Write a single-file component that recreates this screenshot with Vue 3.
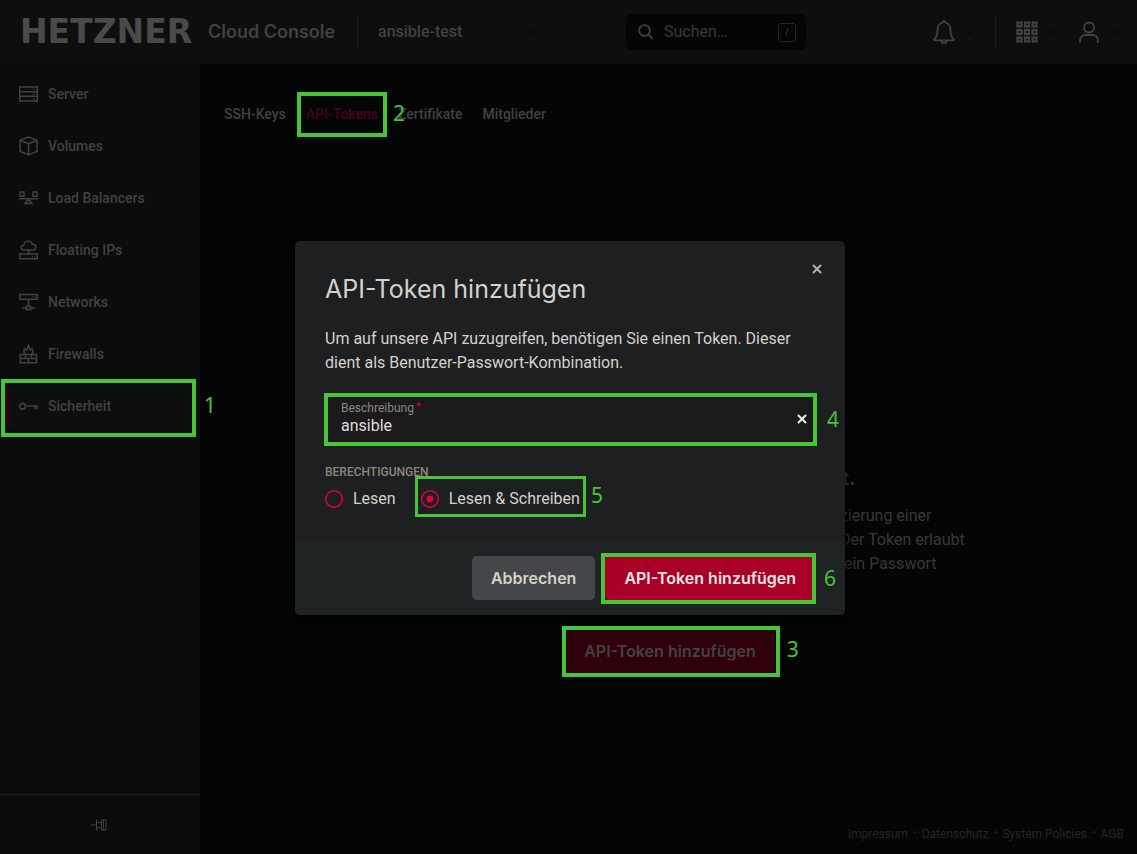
<script setup>
import { ref } from 'vue'

const project = ref('ansible-test')
const description = ref('ansible')
const permission = ref('rw')

const nav = [
  { label: 'Server', icon: 'server' },
  { label: 'Volumes', icon: 'volume' },
  { label: 'Load Balancers', icon: 'balancer' },
  { label: 'Floating IPs', icon: 'floating' },
  { label: 'Networks', icon: 'network' },
  { label: 'Firewalls', icon: 'firewall' },
  { label: 'Sicherheit', icon: 'key', step: 1 },
]

const paths = {
  server: 'M.7 3h17.6v14H.7z M.7 7.7h17.6 M.7 12.3h17.6 M14 5.3h1.500 M14 10h1.500 M14 14.7h1.500',
  volume: 'M9.500 1l8.500 3.200v11.300L9.500 19 1 15.500V4.200z M1 4.200l8.500 3.600L18 4.200 M9.500 7.800V19',
  balancer: 'M1 4h4v4.200H1z M14 4h4v4.200h-4z M0 10.800h19 M9.500 11.500l3.500 4H6z',
  floating: 'M5 10C1 10 1.200 5.200 4.700 5.300 5.500 .2 12.500 .2 13.300 4.300 18.300 4.500 17.300 10 14 10z M9.500 10v4 M.7 14h17.600v4.800H.7z M13 16.400h1 M15.500 16.400h1',
  network: 'M.7 2.500h17.600v4.800H.7z M13.500 5h1 M15.500 5h1 M9.500 7.500v7 M3 16h4 M12 16h4 M7.500 14.300h4v3.400h-4z',
  firewall: 'M1.200 10.500h16.300v8.200H1.200z M1.200 14.600h16.300 M6.500 10.500v4 M12.500 10.500v4 M9.500 14.600v4.200 M6 10C4 8 5 6 5.500 4.500L7.500 6l2-4.500L11 6l2-1.500C14.500 7 14.500 8.500 12.500 10',
  key: 'M6.500 10.300a2.900 2.900 0 1 1-5.800 0a2.900 2.900 0 1 1 5.800 0z M6.500 10h12.300 M18 10v3.500 M15.700 10v3',
}

const tabs = [
  { label: 'SSH-Keys' },
  { label: 'API-Tokens', active: true, step: 2 },
  { label: 'Zertifikate' },
  { label: 'Mitglieder' },
]

const legal = ['Impressum', 'Datenschutz', 'System Policies', 'AGB']
</script>

<template>
  <div class="console">
    <header class="topbar">
      <a class="brand" href="#">
        <span class="wordmark">HETZNER</span>
        <span class="product">Cloud Console</span>
      </a>
      <div class="project">
        <select v-model="project" aria-label="Projekt">
          <option>ansible-test</option>
        </select>
        <svg class="chevron" viewBox="0 0 10 6"><path d="M1 1l4 4 4-4" /></svg>
      </div>
      <label class="search">
        <svg viewBox="0 0 16 16"><circle cx="6.500" cy="6.500" r="5.400" /><path d="M10.500 10.500l4.500 4.500" /></svg>
        <input type="search" placeholder="Suchen…" aria-label="Suchen" />
        <kbd>/</kbd>
      </label>
      <div class="tools">
        <button type="button" class="tool" aria-label="Benachrichtigungen">
          <svg class="glyph" viewBox="0 0 22 24">
            <path d="M9.500 2.500a1.500 1.500 0 0 1 3 0c3.500 1 5 4 5 7.500 0 5 1 7.500 3.300 9.500v.8H1.200v-.8C3.500 17.500 4.500 15 4.500 10c0-3.500 1.500-6.500 5-7.500z M8.500 20.800a2.500 2.300 0 0 0 5 0" />
          </svg>
          <svg class="chevron" viewBox="0 0 10 6"><path d="M1 1l4 4 4-4" /></svg>
        </button>
        <span class="rule"></span>
        <button type="button" class="tool" aria-label="Produkte">
          <svg class="glyph grid" viewBox="0 0 22 24">
            <template v-for="r in 3" :key="r">
              <rect v-for="c in 3" :key="c" :x="c * 7.500 - 6" :y="r * 7.500 - 5" width="4" height="4" />
            </template>
          </svg>
          <svg class="chevron" viewBox="0 0 10 6"><path d="M1 1l4 4 4-4" /></svg>
        </button>
        <button type="button" class="tool" aria-label="Konto">
          <svg class="glyph" viewBox="0 0 22 24">
            <circle cx="11" cy="7.500" r="5" />
            <path d="M2.200 23v-3a5 5 0 0 1 5-5h7.600a5 5 0 0 1 5 5v3" />
          </svg>
          <svg class="chevron" viewBox="0 0 10 6"><path d="M1 1l4 4 4-4" /></svg>
        </button>
      </div>
    </header>

    <div class="body">
      <aside class="sidebar">
        <nav>
          <a v-for="item in nav" :key="item.label" href="#" :class="{ active: item.step }">
            <svg viewBox="0 0 20 20"><path :d="paths[item.icon]" /></svg>
            {{ item.label }}
            <span v-if="item.step" class="mark mark-nav"><span>{{ item.step }}</span></span>
          </a>
        </nav>
        <button type="button" class="pin" aria-label="Seitenleiste anheften">
          <svg viewBox="0 0 16 12"><path d="M0 6h5 M5.500 .5v11 M5.500 3l5 1V1h4.500v10h-4.500V8l-5 1 M12.500 1v10 M10.500 4v4" /></svg>
        </button>
      </aside>

      <main>
        <nav class="tabs">
          <a v-for="tab in tabs" :key="tab.label" href="#" :class="{ current: tab.active }">
            {{ tab.label }}
            <span v-if="tab.step" class="mark mark-tab"><span>{{ tab.step }}</span></span>
          </a>
        </nav>
        <section class="empty">
          <div class="copy">
            <h2>t.</h2>
            <p>zierung einer<br />Der Token erlaubt<br />&nbsp;ein Passwort</p>
          </div>
          <button type="button" class="btn dimmed">
            API-Token hinzufügen
            <span class="mark mark-btn"><span>3</span></span>
          </button>
        </section>
        <footer class="legal">
          <template v-for="(entry, i) in legal" :key="entry">
            <span v-if="i" class="dot">·</span>
            <a href="#">{{ entry }}</a>
          </template>
        </footer>
      </main>
    </div>

    <div class="overlay">
      <form class="dialog" role="dialog" aria-labelledby="dialog-title" @submit.prevent>
        <div class="content">
          <button type="button" class="close" aria-label="Schließen">
            <svg viewBox="0 0 10 10"><path d="M1 1l8 8 M9 1l-8 8" /></svg>
          </button>
          <h1 id="dialog-title">API-Token hinzufügen</h1>
          <p>Um auf unsere API zuzugreifen, benötigen Sie einen Token. Dieser dient als Benutzer-Passwort-Kombination.</p>
          <div class="field">
            <label for="description">Beschreibung<sup>*</sup></label>
            <input id="description" v-model="description" type="text" />
            <button type="button" class="clear" aria-label="Leeren" @click="description = ''">
              <svg viewBox="0 0 10 10"><path d="M1 1l8 8 M9 1l-8 8" /></svg>
            </button>
            <span class="mark mark-field"><span>4</span></span>
          </div>
          <fieldset>
            <legend>BERECHTIGUNGEN</legend>
            <div class="options">
              <label><input v-model="permission" type="radio" name="permission" value="r" />Lesen</label>
              <label>
                <input v-model="permission" type="radio" name="permission" value="rw" />Lesen &amp; Schreiben
                <span class="mark mark-option"><span>5</span></span>
              </label>
            </div>
          </fieldset>
        </div>
        <div class="actions">
          <button type="button" class="btn neutral">Abbrechen</button>
          <button type="submit" class="btn primary">
            API-Token hinzufügen
            <span class="mark mark-submit"><span>6</span></span>
          </button>
        </div>
      </form>
    </div>
  </div>
</template>

<style>
html,
body {
  background: #040605;
  overflow: hidden;
}
</style>

<style scoped>
* {
  box-sizing: border-box;
}

.console {
  position: relative;
  display: flex;
  flex-direction: column;
  width: calc(100vw + 3px);
  height: calc(100vh + 2px);
  background: #040605;
  color: #414141;
  font: 14px/20px Roboto, sans-serif;
}

button,
input,
select {
  padding: 0;
  border: 0;
  background: none;
  color: inherit;
  font: inherit;
  appearance: none;
  outline: none;
}

a {
  color: inherit;
  text-decoration: none;
}

svg {
  display: block;
  flex: none;
  fill: none;
  stroke: currentColor;
}

/* Top bar */
.topbar {
  display: grid;
  grid-template-columns: 357px 269px 180px 1fr;
  align-items: center;
  flex: none;
  height: 64px;
  background: #0d0f0e;
}

.brand {
  display: flex;
  align-items: center;
  gap: 16px;
  padding-left: 20px;
  white-space: nowrap;
}

.wordmark {
  width: 172px;
  color: #4a4a4a;
  font: bold 33px/32px "DejaVu Sans", sans-serif;
}

.product {
  font: 600 18px/24px Inter, sans-serif;
}

.project {
  display: flex;
  align-items: center;
  justify-content: space-between;
  height: 32px;
  padding: 0 88px 0 20px;
  border-left: 1px solid #1d1e1e;
}

.project select {
  font-size: 16px;
  font-weight: 500;
}

.chevron {
  width: 10px;
  height: 6px;
  stroke: #070908;
  stroke-width: 1.500;
}

.search {
  display: flex;
  align-items: center;
  gap: 10px;
  height: 36px;
  padding: 0 10px 0 12px;
  border-radius: 5px;
  background: #040605;
}

.search svg {
  width: 16px;
  height: 16px;
  stroke-width: 1.800;
}

.search input {
  flex: 1;
  min-width: 0;
  font-size: 16px;
}

.search input::placeholder {
  color: #3a3a3a;
}

.search kbd {
  width: 18px;
  height: 19px;
  border: 1px solid #222423;
  border-radius: 3px;
  font: 9px/17px Roboto, sans-serif;
  text-align: center;
}

.tools {
  display: flex;
  align-items: center;
  justify-content: flex-end;
  gap: 20px;
  padding-right: 20px;
}

.tool {
  display: flex;
  align-items: center;
  gap: 10px;
}

.glyph {
  width: 22px;
  height: 24px;
  stroke-width: 1.800;
}

.grid {
  stroke-width: 2.200;
}

.rule {
  width: 1px;
  height: 32px;
  background: #221e1b;
}

/* Navigation */
.body {
  display: flex;
  flex: 1;
  min-height: 0;
}

.sidebar {
  display: flex;
  flex-direction: column;
  justify-content: space-between;
  flex: none;
  width: 200px;
  background: #0b0d0c;
}

.sidebar nav {
  display: flex;
  flex-direction: column;
  gap: 12px;
  padding: 10px 10px 0 6px;
}

.sidebar a {
  position: relative;
  display: flex;
  align-items: center;
  gap: 9px;
  height: 40px;
  padding-left: 10px;
  border-left: 3px solid transparent;
  border-radius: 0 5px 5px 0;
  font-weight: 500;
}

.sidebar .active {
  border-left-color: #35000e;
  background: #0d0f0e;
}

.sidebar a svg {
  width: 20px;
  height: 20px;
  stroke-width: 1.500;
}

.pin {
  display: flex;
  align-items: center;
  justify-content: center;
  height: 62px;
  padding: 0 2px 2px 0;
  border-top: 1px solid #1d1f1e;
}

.pin svg {
  width: 16px;
  height: 12px;
}

/* Page */
main {
  display: flex;
  flex-direction: column;
  flex: 1;
  min-width: 0;
}

.tabs {
  display: flex;
  gap: 20px;
  padding: 40px 24px 0;
  font-weight: 500;
}

.tabs a {
  position: relative;
}

.tabs .current {
  color: #430418;
}

.empty {
  display: flex;
  flex-direction: column;
  align-items: center;
  flex: 1;
  padding-top: 342px;
}

.copy {
  width: 598px;
  padding-left: 469px;
  font-size: 16px;
  line-height: 24px;
}

.copy h2 {
  margin: 0 0 14px;
  padding-left: 2px;
  font: 600 20px/24px Inter, sans-serif;
}

.copy p {
  margin: 0 0 53px;
  color: #383838;
  white-space: nowrap;
}

.legal {
  display: flex;
  justify-content: flex-end;
  gap: 5px;
  padding: 0 16px 12px;
  color: #252525;
  font-size: 12px;
}

.dot {
  font-weight: 700;
  line-height: 18px;
}

/* Buttons */
.btn {
  position: relative;
  height: 44px;
  padding: 0 19px;
  border-radius: 5px;
  font: 600 16px/24px Inter, sans-serif;
  white-space: nowrap;
}

.dimmed {
  background: #30000b;
  color: #444040;
}

.neutral {
  background: #434749;
  color: #d5d2cc;
}

.primary {
  background: #a90028;
  color: #e8e6e3;
}

/* Dialog */
.overlay {
  position: absolute;
  inset: 0;
  display: flex;
  align-items: center;
  justify-content: center;
}

.dialog {
  width: 550px;
  border-radius: 5px;
  background: #1e1f21;
  box-shadow: 0 8px 16px #000000;
  color: #d5d2cc;
}

.content {
  position: relative;
  padding: 32px 30px 30px;
  font-size: 16px;
  line-height: 24px;
}

.close {
  position: absolute;
  top: 23px;
  right: 23px;
  color: #b5b0a7;
}

.close svg,
.clear svg {
  width: 10px;
  height: 10px;
  stroke-width: 2;
}

h1 {
  margin: 0 0 22px;
  font: 400 25px/32px Inter, sans-serif;
}

.content p {
  margin: 0 0 19px;
}

.field {
  position: relative;
  display: grid;
  grid-template: 16px 20px / 1fr auto;
  align-content: start;
  height: 51px;
  margin-right: -1px;
  padding: 6px 9px 8px 16px;
  background: #1a1a1c;
}

.field label {
  color: #8d867b;
  font-size: 12px;
  line-height: 16px;
}

.field sup {
  margin-left: 2px;
  color: #d8003a;
  font-size: 11px;
  line-height: 0;
  vertical-align: 2px;
}

.field input {
  grid-row: 2;
  height: 20px;
  color: #e0ddd8;
  line-height: 20px;
}

.clear {
  grid-area: 1 / 2 / 3 / 3;
  padding-top: 2px;
  color: #f0efed;
}

fieldset {
  margin: 19px 0 0;
  padding: 0;
  border: 0;
}

legend {
  padding: 0;
  color: #8d867b;
  font-size: 12px;
  font-weight: 500;
  line-height: 16px;
}

.options {
  display: flex;
  gap: 25px;
  padding-top: 7px;
}

.options label {
  position: relative;
  display: flex;
  align-items: center;
}

.options input {
  width: 18px;
  height: 18px;
  margin: 0 10px 0 0;
  border-radius: 50%;
  background: radial-gradient(circle, transparent 7px, #e4003e 8px);
}

.options input:checked {
  background: radial-gradient(circle, #e4003e 3px, transparent 4px, transparent 7px, #e4003e 8px);
}

.actions {
  display: flex;
  justify-content: flex-end;
  gap: 10px;
  padding: 15px 30px;
  border-radius: 0 0 5px 5px;
  background: #1f2324;
}

/* Numbered step markers */
.mark {
  position: absolute;
  z-index: 1;
  border: 4px solid #48c436;
  color: #48c436;
  font: 400 21px/24px "Noto Sans", sans-serif;
  pointer-events: none;
}

.mark span {
  position: absolute;
  top: 50%;
  left: 100%;
  margin: -13px 0 0 12px;
}

.mark-nav {
  inset: -7px -6px -11px -8px;
}

.mark-nav span {
  margin-top: -15px;
}

.mark-tab {
  inset: -12px -9px -13px;
}

.mark-tab span {
  margin: -14px 0 0 10px;
}

.mark-btn {
  inset: -3px -5px -4px -3px;
}

.mark-btn span {
  margin: -15px 0 0 11px;
}

.mark-submit {
  inset: -3px -1px -4px -4px;
}

.mark-submit span {
  margin: -13px 0 0 12px;
}

.mark-field {
  inset: -1px;
}

.mark-field span {
  margin-left: 14px;
}

.mark-option {
  inset: -11px -6px -6px;
  border-width: 3px;
}

.mark-option span {
  margin: -14px 0 0 8px;
}
</style>
